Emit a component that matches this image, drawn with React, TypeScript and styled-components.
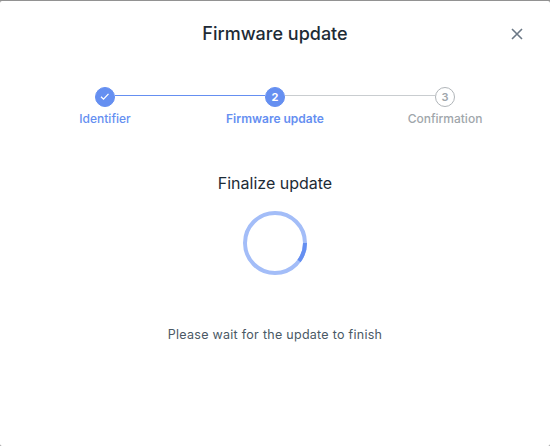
import React from "react";
import styled, { createGlobalStyle } from "styled-components";

const Global = createGlobalStyle`
  * { box-sizing: border-box; }
  body { margin: 0; background: #929292; font-family: Inter, "Liberation Sans", sans-serif; }
`;

const Modal = styled.main`
  position: relative;
  height: 445px;
  margin-top: 1px;
  display: flex;
  flex-direction: column;
  align-items: center;
  background: #fff;
  border-radius: 2px;
`;

const Page = styled.div`
  display: flow-root;
`;

const Title = styled.h1`
  margin: 21px 0 0;
  font-size: 18px;
  line-height: 24px;
  font-weight: 500;
  color: #1d2b36;
`;

const Close = styled.button`
  position: absolute;
  top: 25px;
  right: 25px;
  width: 16px;
  height: 16px;
  padding: 0;
  border: 0;
  background: none;
  svg { display: block; }
`;

const Steps = styled.ol`
  list-style: none;
  display: grid;
  grid-template-columns: repeat(3, 170px);
  margin: 41px 0 0;
  padding: 0;
`;

type StepState = "done" | "current" | "todo";

const StepItem = styled.li<{ $state: StepState }>`
  display: flex;
  flex-direction: column;
  align-items: center;
  gap: 4px;
  font-size: 12px;
  line-height: 16px;
  font-weight: ${p => (p.$state === "current" ? 600 : 500)};
  color: ${p => (p.$state === "todo" ? "#a0a6ab" : "#658ff1")};
`;

const Track = styled.div`
  align-self: stretch;
  display: flex;
  align-items: center;
`;

const Line = styled.span<{ $color: string }>`
  flex: 1;
  height: 1px;
  margin-bottom: 3px;
  background: ${p => p.$color};
`;

const Bullet = styled.span<{ $state: StepState }>`
  width: 20px;
  height: 20px;
  display: flex;
  align-items: center;
  justify-content: center;
  border-radius: 50%;
  border: 1px solid ${p => (p.$state === "todo" ? "#b0b5b9" : "#658ff1")};
  background: ${p => (p.$state === "todo" ? "#fff" : "#658ff1")};
  color: ${p => (p.$state === "todo" ? "#a0a6ab" : "#fff")};
  font-size: 11px;
  line-height: 12px;
  font-weight: ${p => (p.$state === "todo" ? 600 : 700)};
`;

const Heading = styled.h2`
  margin: 46px 0 0;
  font-size: 16px;
  line-height: 20px;
  font-weight: 400;
  color: #1d2b36;
`;

const Spinner = styled.svg`
  display: block;
  margin-top: 17px;
`;

const Note = styled.p`
  margin: 50px 0 0;
  font-size: 12.5px;
  line-height: 18px;
  letter-spacing: 0.28px;
  color: #4a5965;
`;

const steps: { label: string; state: StepState; left: string; right: string }[] = [
  { label: "Identifier", state: "done", left: "transparent", right: "#658ff1" },
  { label: "Firmware update", state: "current", left: "#658ff1", right: "#c9cdd0" },
  { label: "Confirmation", state: "todo", left: "#c9cdd0", right: "transparent" },
];

export default function App() {
  return (
    <Page>
      <Global />
      <Modal>
        <Title>Firmware update</Title>
        <Close aria-label="Close">
          <svg width="16" height="16" viewBox="0 0 16 16" fill="none" stroke="#6b7886" strokeWidth="1.6">
            <path d="M3 3l10 10M13 3L3 13" />
          </svg>
        </Close>
        <Steps>
          {steps.map((s, i) => (
            <StepItem key={s.label} $state={s.state}>
              <Track>
                <Line $color={s.left} />
                <Bullet $state={s.state}>
                  {s.state === "done" ? (
                    <svg width="12" height="12" viewBox="0 0 12 12" fill="none" stroke="#fff" strokeWidth="1.3">
                      <path d="M2 5.7l2.5 2.4 5-5.2" />
                    </svg>
                  ) : (
                    i + 1
                  )}
                </Bullet>
                <Line $color={s.right} />
              </Track>
              {s.label}
            </StepItem>
          ))}
        </Steps>
        <Heading>Finalize update</Heading>
        <Spinner width="66" height="66" viewBox="0 0 66 66" fill="none" strokeWidth="4">
          <circle cx="33" cy="33" r="30" stroke="#a3bdf8" />
          <path d="M63 33A30 30 0 0 1 57 51" stroke="#658ff1" />
        </Spinner>
        <Note>Please wait for the update to finish</Note>
      </Modal>
    </Page>
  );
}
